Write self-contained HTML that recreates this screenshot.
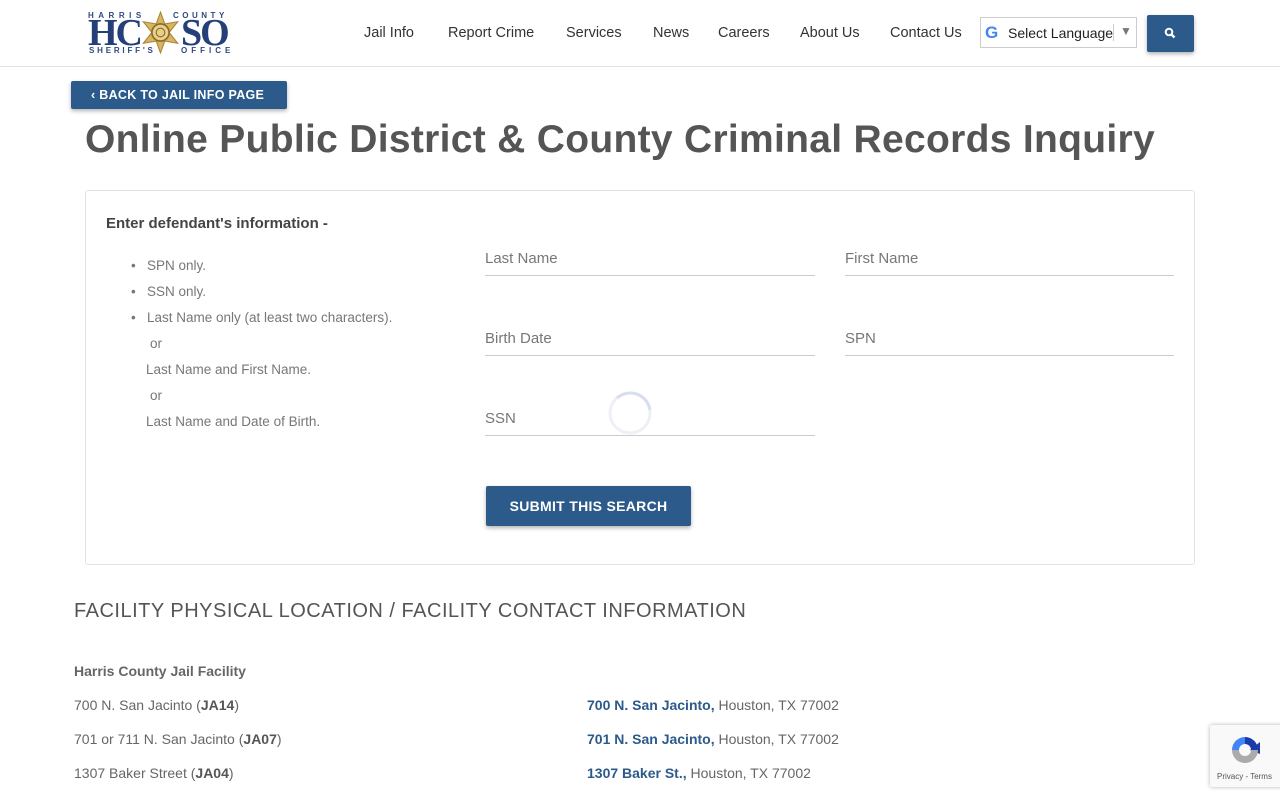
<!DOCTYPE html>
<html><head><meta charset="utf-8"><style>
*{box-sizing:border-box;margin:0;padding:0}
body{width:1280px;height:800px;overflow:hidden;background:#fff;font-family:"Liberation Sans",sans-serif;color:#666;position:relative}
.abs{position:absolute}
header{position:absolute;left:0;top:0;width:1280px;height:67px;border-bottom:1px solid #e3e3e3}
nav a{position:absolute;top:25px;font-size:14.5px;color:#333;text-decoration:none}
.btn{background:#2c5a8a;color:#fff;font-weight:bold;box-shadow:0 2px 4px rgba(0,0,0,.3);border-radius:2px}
.field{position:absolute;width:330px;border-bottom:1px solid #ccc;height:26px;font-size:15px;color:#777}
.row{position:absolute;font-size:14px;color:#666}
.row b{color:#555}
.blue{color:#2c5a8a;font-weight:bold}
.lg{position:absolute;font-family:'Liberation Serif',serif;font-size:38px;font-weight:bold;color:#253f78;top:14px;letter-spacing:-2px;line-height:38px}
.sm{position:absolute;font-size:8px;color:#2c4a80;font-weight:bold}
</style></head><body>
<header>
 <div class="sm" style="left:88px;top:11px;letter-spacing:4.5px">HARRIS</div>
 <div class="sm" style="left:173px;top:11px;letter-spacing:3.5px">COUNTY</div>
 <div class="lg" style="left:88px">HC</div>
 <div class="lg" style="left:181px">SO</div>
 <svg class="abs" style="left:140px;top:11px" width="41" height="43" viewBox="0 0 38 40"><polygon points="19,1 23,12 35,10 27,20 35,30 23,28 19,39 15,28 3,30 11,20 3,10 15,12" fill="#d9b560" stroke="#a8863a"/><circle cx="19" cy="20" r="8" fill="#e8cf8a" stroke="#8a6a2a" stroke-width="1.5"/><circle cx="19" cy="20" r="4" fill="none" stroke="#8a6a2a"/></svg>
 <div class="sm" style="left:89px;top:46px;letter-spacing:2.8px">SHERIFF'S</div>
 <div class="sm" style="left:181px;top:46px;letter-spacing:4px">OFFICE</div>
 <nav>
  <a style="left:364px">Jail Info</a><a style="left:448px">Report Crime</a><a style="left:566px">Services</a><a style="left:653px">News</a><a style="left:718px">Careers</a><a style="left:800px">About Us</a><a style="left:890px">Contact Us</a>
 </nav>
 <div class="abs" style="left:980px;top:17px;width:157px;height:31px;border:1px solid #ccc;font-size:14px;color:#222">
  <span class="abs" style="left:4px;top:5px;font-weight:bold;font-size:17px;color:#4285f4">G</span>
  <span class="abs" style="left:27px;top:7px">Select Language</span>
  <span class="abs" style="left:132px;top:6px;height:17px;border-left:1px solid #ccc"></span>
  <span class="abs" style="left:139px;top:6px;color:#777;font-size:12px">▼</span>
 </div>
 <div class="abs btn" style="left:1147px;top:15px;width:47px;height:37px">
  <svg class="abs" style="left:17px;top:12px" width="12" height="12" viewBox="0 0 12 12"><circle cx="5" cy="5" r="3.3" fill="none" stroke="#fff" stroke-width="2"/><line x1="7.5" y1="7.5" x2="10.5" y2="10.5" stroke="#fff" stroke-width="2.4"/></svg>
 </div>
</header>
<div class="abs btn" style="left:71px;top:81px;width:216px;height:28px;font-size:12.5px;line-height:28px;padding-left:20px;letter-spacing:.3px">‹ BACK TO JAIL INFO PAGE</div>
<h1 class="abs" style="left:85px;top:118px;font-size:39px;color:#555;font-weight:bold;white-space:nowrap;letter-spacing:0.3px">Online Public District &amp; County Criminal Records Inquiry</h1>
<div class="abs" style="left:85px;top:190px;width:1110px;height:375px;border:1px solid #e3e3e3;border-radius:3px"></div>
<div class="abs" style="left:106px;top:215px;font-size:15px;font-weight:bold;color:#444">Enter defendant's information -</div>
<div class="abs" style="left:131px;top:253px;font-size:13.5px;line-height:26px;color:#777">
 <div>•&nbsp;&nbsp;&nbsp;SPN only.</div><div>•&nbsp;&nbsp;&nbsp;SSN only.</div><div>•&nbsp;&nbsp;&nbsp;Last Name only (at least two characters).</div>
 <div style="padding-left:19px">or</div><div style="padding-left:15px">Last Name and First Name.</div><div style="padding-left:19px">or</div><div style="padding-left:15px">Last Name and Date of Birth.</div>
</div>
<div class="field" style="left:485px;top:250px">Last Name</div>
<div class="field" style="left:845px;top:250px;width:329px">First Name</div>
<div class="field" style="left:485px;top:330px">Birth Date</div>
<div class="field" style="left:845px;top:330px;width:329px">SPN</div>
<div class="field" style="left:485px;top:410px">SSN</div>
<svg class="abs" style="left:607px;top:390px" width="46" height="46"><circle cx="23" cy="23" r="20" fill="none" stroke="#eef0f7" stroke-width="3"/><path d="M10 8 A20 20 0 0 1 43 20" fill="none" stroke="#d8def0" stroke-width="3"/></svg>
<div class="abs btn" style="left:486px;top:486px;width:205px;height:40px;font-size:14px;line-height:40px;text-align:center;letter-spacing:.3px">SUBMIT THIS SEARCH</div>
<div class="abs" style="left:74px;top:600px;font-size:20px;color:#555;letter-spacing:0.5px;white-space:nowrap">FACILITY PHYSICAL LOCATION / FACILITY CONTACT INFORMATION</div>
<div class="row" style="left:74px;top:663px;font-weight:bold;color:#666">Harris County Jail Facility</div>
<div class="row" style="left:74px;top:697px">700 N. San Jacinto (<b>JA14</b>)</div>
<div class="row" style="left:74px;top:731px">701 or 711 N. San Jacinto (<b>JA07</b>)</div>
<div class="row" style="left:74px;top:765px">1307 Baker Street (<b>JA04</b>)</div>
<div class="row" style="left:587px;top:697px"><span class="blue">700 N. San Jacinto,</span> Houston, TX 77002</div>
<div class="row" style="left:587px;top:731px"><span class="blue">701 N. San Jacinto,</span> Houston, TX 77002</div>
<div class="row" style="left:587px;top:765px"><span class="blue">1307 Baker St.,</span> Houston, TX 77002</div>
<div class="abs" style="left:1210px;top:725px;width:75px;height:62px;background:#f9f9f9;box-shadow:0 0 4px rgba(0,0,0,.3);border-radius:2px">
 <svg class="abs" style="left:17px;top:7px" width="36" height="36" viewBox="0 0 36 36">
  <path d="M18 5a13 13 0 0 1 13 13h-7a6 6 0 0 0-6-6z" fill="#1c3aa9"/><polygon points="33,10 33,22 23,18" fill="#1c3aa9"/>
  <path d="M5 18A13 13 0 0 1 18 5v7a6 6 0 0 0-6 6z" fill="#4285f4"/>
  <path d="M5 18h7a6 6 0 0 0 12 0h7A13 13 0 0 1 5 18z" fill="#ababab"/>
 </svg>
 <div class="abs" style="left:7px;top:47px;font-size:8px;color:#555">Privacy - Terms</div>
</div>
</body></html>
